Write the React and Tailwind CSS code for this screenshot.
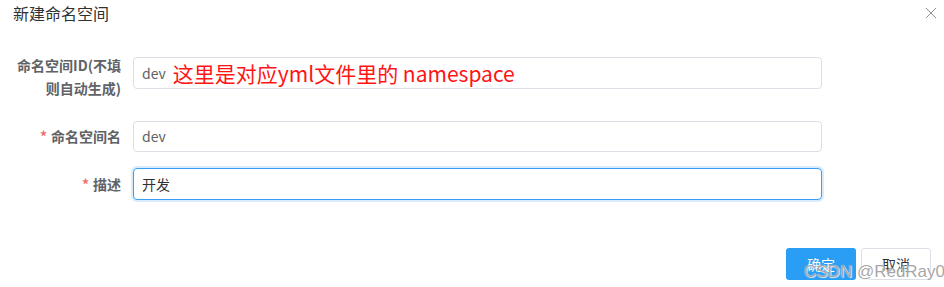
import React from 'react';

const Field = ({ label, required, children, className = '', align = 'items-center' }) => (
    <div className={`flex ${align} ${className}`}>
        <div className="w-[133px] shrink-0 pr-[12px] text-right text-[14px] font-bold text-[#606266]">
            {required && <span className="mr-[4px] text-[#f56c6c]">*</span>}
            {label}
        </div>
        {children}
    </div>
);

const App = () => {
    return (
        <div
            className="relative h-[287px] w-[944px] overflow-hidden bg-white"
            style={{ fontFamily: '"Noto Sans CJK SC", "Noto Sans", sans-serif' }}
        >
            {/* header */}
            <div className="flex items-start justify-between pl-[13px] pr-[7px] pt-[3px]">
                <div className="text-[16px] leading-[20px] text-[#303133]">新建命名空间</div>
                <svg width="12" height="12" viewBox="0 0 12 12" className="mt-[4px]">
                    <path d="M1 1 L11 11 M11 1 L1 11" stroke="#909399" strokeWidth="1" fill="none" />
                </svg>
            </div>

            {/* form */}
            <div className="mt-[31px]">
                <Field
                    align="items-start"
                    label={
                        <span className="leading-[23px]">
                            命名空间ID(不填
                            <br />
                            则自动生成)
                        </span>
                    }
                >
                    <div className="mt-[3px] flex h-[32px] w-[689px] items-center rounded-[4px] border border-[#dcdfe6] pl-[8px] text-[14px] text-[#606266]">
                        <span>dev</span>
                        <span className="ml-[7px] text-[21px] leading-none text-[#ff1414]">这里是对应yml文件里的 namespace</span>
                    </div>
                </Field>

                <Field required label="命名空间名" className="mt-[21px]">
                    <div className="flex h-[31px] w-[689px] items-center rounded-[4px] border border-[#dcdfe6] pl-[8px] text-[14px] text-[#606266]">
                        dev
                    </div>
                </Field>

                <Field required label="描述" className="mt-[16px]">
                    <div className="flex h-[32px] w-[689px] items-center rounded-[4px] border border-[#3a9ef5] pl-[8px] text-[14px] text-[#303133] shadow-[0_0_0_2px_rgba(58,158,245,0.2)]">
                        开发
                    </div>
                </Field>
            </div>

            {/* footer */}
            <div className="mt-[48px] flex justify-end gap-[5px] pr-[13px]">
                <button className="h-[32px] w-[70px] rounded-[3px] bg-[#2a9df4] text-[14px] text-white">确定</button>
                <button className="h-[32px] w-[70px] rounded-[3px] border border-[#dcdfe6] bg-white text-[14px] text-[#303133]">取消</button>
            </div>

            {/* watermark */}
            <div
                className="absolute left-[804px] top-[259px] whitespace-nowrap text-[17px] text-[#8f8f8f]/80"
                style={{ fontFamily: '"Liberation Sans", sans-serif', textShadow: '0 0 1px #fff, 1px 1px 1px rgba(255,255,255,0.8)' }}
            >
                CSDN @RedRay0
            </div>
        </div>
    );
};

export default App;
